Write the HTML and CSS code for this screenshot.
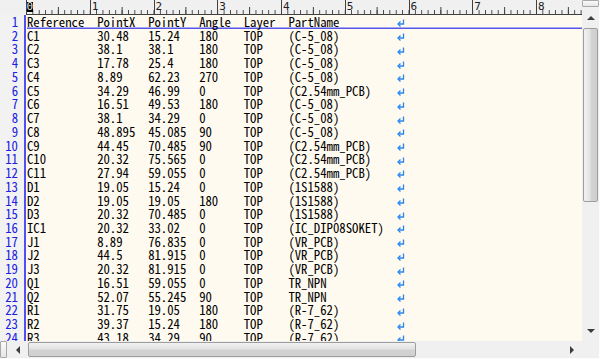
FILE: index.html
```html
<!DOCTYPE html>
<html lang="ja">
    <head>
        <meta charset="UTF-8">
        <title>parts.txt - editor</title>
        <link rel="stylesheet" href="styles.css">
    </head>
    <body>
        <div class="editor">
            <div class="ruler_row">
                <div class="ruler_pad"></div>
                <div class="ruler">
                    <div class="mark"><span class="cursor">0</span></div>
                    <div class="mark">1</div>
                    <div class="mark">2</div>
                    <div class="mark">3</div>
                    <div class="mark">4</div>
                    <div class="mark">5</div>
                    <div class="mark">6</div>
                    <div class="mark">7</div>
                    <div class="mark">8</div>
                </div>
            </div>

            <div class="vscroll">
                <div class="split_box"></div>
                <div class="btn"><span class="arrow up"></span></div>
                <div class="track">
                    <div class="thumb"></div>
                </div>
                <div class="btn"><span class="arrow down"></span></div>
            </div>

            <div class="main">
                <div class="gutter" id="gutter"></div>
                <div class="text" id="text"></div>
            </div>

            <div class="hscroll">
                <div class="split_box"></div>
                <div class="btn"><span class="arrow left"></span></div>
                <div class="track">
                    <div class="thumb"></div>
                </div>
                <div class="btn"><span class="arrow right"></span></div>
            </div>
            <div class="size_box"></div>
        </div>

        <script>
            const rows = [
                ['Reference', 'PointX', 'PointY', 'Angle', 'Layer', 'PartName'],
                ['C1', '30.48', '15.24', '180', 'TOP', '(C-5_08)'],
                ['C2', '38.1', '38.1', '180', 'TOP', '(C-5_08)'],
                ['C3', '17.78', '25.4', '180', 'TOP', '(C-5_08)'],
                ['C4', '8.89', '62.23', '270', 'TOP', '(C-5_08)'],
                ['C5', '34.29', '46.99', '0', 'TOP', '(C2.54mm_PCB)'],
                ['C6', '16.51', '49.53', '180', 'TOP', '(C-5_08)'],
                ['C7', '38.1', '34.29', '0', 'TOP', '(C-5_08)'],
                ['C8', '48.895', '45.085', '90', 'TOP', '(C-5_08)'],
                ['C9', '44.45', '70.485', '90', 'TOP', '(C2.54mm_PCB)'],
                ['C10', '20.32', '75.565', '0', 'TOP', '(C2.54mm_PCB)'],
                ['C11', '27.94', '59.055', '0', 'TOP', '(C2.54mm_PCB)'],
                ['D1', '19.05', '15.24', '0', 'TOP', '(1S1588)'],
                ['D2', '19.05', '19.05', '180', 'TOP', '(1S1588)'],
                ['D3', '20.32', '70.485', '0', 'TOP', '(1S1588)'],
                ['IC1', '20.32', '33.02', '0', 'TOP', '(IC_DIP08SOKET)'],
                ['J1', '8.89', '76.835', '0', 'TOP', '(VR_PCB)'],
                ['J2', '44.5', '81.915', '0', 'TOP', '(VR_PCB)'],
                ['J3', '20.32', '81.915', '0', 'TOP', '(VR_PCB)'],
                ['Q1', '16.51', '59.055', '0', 'TOP', 'TR_NPN'],
                ['Q2', '52.07', '55.245', '90', 'TOP', 'TR_NPN'],
                ['R1', '31.75', '19.05', '180', 'TOP', '(R-7_62)'],
                ['R2', '39.37', '15.24', '180', 'TOP', '(R-7_62)'],
                ['R3', '43.18', '34.29', '90', 'TOP', '(R-7_62)']
            ];

            const eol = '<svg class="eol" width="8" height="8" viewBox="0 0 8 8">'
                + '<path d="M6.5 0.5 V5 H1.5" fill="none" stroke="currentColor" stroke-width="1.3"/>'
                + '<path d="M3.5 2.5 L1 5 L3.5 7.5" fill="none" stroke="currentColor" stroke-width="1.3"/>'
                + '</svg>';

            const gutterDiv = document.getElementById('gutter');
            const textDiv = document.getElementById('text');

            rows.forEach((cells, i) => {
                const num = document.createElement('div');
                num.className = 'line_no';
                num.innerText = i + 1;
                gutterDiv.appendChild(num);

                const line = document.createElement('div');
                line.className = i == 0 ? 'line current' : 'line';
                line.innerHTML = cells.map(c => '<span>' + c + '</span>').join('') + eol;
                textDiv.appendChild(line);
            });
        </script>
    </body>
</html>
```

FILE: styles.css
```css
html, body {
    margin: 0;
    padding: 0;
    background: #fff;
}

.editor {
    --char-width: 6.375px;
    --line-height: 13.74px;
    --bar-color: #f0f0f0;
    --gutter-background: #f2f2f2;
    --text-background: #fffaef;
    --line-no-color: #2020e0;
    --gutter-line-color: #5050f5;
    --eol-color: #2a86ee;

    width: 600px;
    height: 359px;
    box-sizing: border-box;
    border-right: 1px solid #fcfcfc;
    border-bottom: 1px solid #fcfcfc;
    display: grid;
    grid-template-columns: 582px 17px;
    grid-template-rows: 15px 326px 17px;
    font-family: "Noto Sans Mono CJK JP", "Liberation Mono", monospace;
    font-size: 12.75px;
    color: #000;
    overflow: hidden;
}

/* ruler */
.ruler_row {
    display: flex;
    background: var(--bar-color);
}

.ruler_pad {
    width: 26px;
    flex: none;
}

.ruler {
    flex: 1;
    min-width: 0;
    display: flex;
    box-sizing: border-box;
    border-bottom: 1px solid #404040;
    background-image:
        linear-gradient(to right, #404040 1px, transparent 1px),
        linear-gradient(to right, #404040 1px, transparent 1px);
    background-size: var(--char-width) 4px, calc(var(--char-width) * 10) 7px;
    background-position: 0 100%, calc(var(--char-width) * 5) 100%;
    background-repeat: repeat-x;
}

.ruler .mark {
    flex: none;
    width: calc(var(--char-width) * 10);
    box-sizing: border-box;
    border-left: 1px solid #404040;
    padding-left: 1px;
    font-family: "DejaVu Sans Mono", monospace;
    font-size: 11px;
    line-height: 14px;
    height: 14px;
    color: #202020;
}

.ruler .mark:last-child {
    flex: 1;
    width: auto;
}

.ruler .cursor {
    display: inline-block;
    vertical-align: top;
    margin-left: -1.5px;
    margin-top: 2px;
    width: var(--char-width);
    height: 10px;
    line-height: 10px;
    background: #000;
    color: #e8e8e8;
    text-align: center;
}

/* text area */
.main {
    display: flex;
    overflow: hidden;
    background: var(--text-background);
}

.gutter {
    flex: none;
    width: 26px;
    box-sizing: border-box;
    padding-right: 6px;
    border-right: 2px solid var(--gutter-line-color);
    background: var(--gutter-background);
    color: var(--line-no-color);
    text-align: right;
}

.line_no,
.line {
    height: var(--line-height);
    line-height: var(--line-height);
    white-space: pre;
}

.text {
    flex: 1;
    padding-left: 1px;
}

.line {
    display: grid;
    grid-template-columns:
        calc(var(--char-width) * 11)
        calc(var(--char-width) * 8)
        calc(var(--char-width) * 8)
        calc(var(--char-width) * 7)
        calc(var(--char-width) * 7)
        calc(var(--char-width) * 17)
        10px;
    align-items: center;
}

.line.current {
    box-shadow: inset 0 -1.5px 0 #5555ee;
}

.line .eol {
    color: var(--eol-color);
    margin-top: 3px;
}

/* scroll bars */
.vscroll {
    grid-row: 1 / 3;
    grid-column: 2;
    display: flex;
    flex-direction: column;
    background: var(--bar-color);
}

.hscroll {
    display: flex;
    background: var(--bar-color);
}

.size_box {
    background: var(--bar-color);
}

.split_box {
    flex: none;
    box-sizing: border-box;
    background: linear-gradient(#fbfbfb, #e6e6e6);
    border: 1px solid #a8a8a8;
    border-radius: 1px;
}

.vscroll .split_box {
    height: 7px;
}

.hscroll .split_box {
    width: 7px;
}

.btn {
    flex: none;
    width: 17px;
    height: 17px;
    display: flex;
    align-items: center;
    justify-content: center;
}

.vscroll .btn {
    height: 21px;
}

.hscroll .btn {
    width: 21px;
}

.track {
    flex: 1;
    display: flex;
}

.vscroll .track {
    flex-direction: column;
}

.vscroll .thumb {
    height: 172px;
    margin: 0 1px;
    border-radius: 2px;
    border: 1px solid #9d9d9d;
    background: linear-gradient(to right, #f1f1f1, #e3e3e3 45%, #d3d3d3 55%, #cfcfcf);
}

.hscroll .thumb {
    width: 386px;
    margin: 1px 0;
    border-radius: 2px;
    border: 1px solid #9d9d9d;
    background: linear-gradient(#f1f1f1, #e3e3e3 45%, #d3d3d3 55%, #cfcfcf);
}

.arrow {
    width: 0;
    height: 0;
    border: 4px solid transparent;
}

.arrow.up {
    border-bottom-color: #3c3c3c;
    border-top-width: 0;
}

.arrow.down {
    border-top-color: #3c3c3c;
    border-bottom-width: 0;
}

.arrow.left {
    border-right-color: #3c3c3c;
    border-left-width: 0;
}

.arrow.right {
    border-left-color: #3c3c3c;
    border-right-width: 0;
}
```
